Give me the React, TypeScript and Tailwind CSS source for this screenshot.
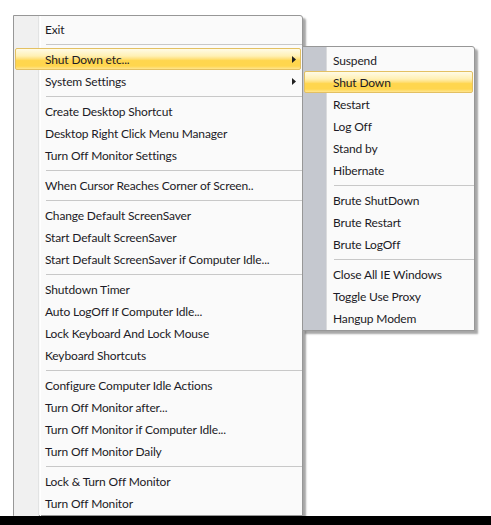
type Entry = { label: string; arrow?: boolean; active?: boolean } | 'sep'

const mainItems: Entry[] = [
  { label: 'Exit' },
  'sep',
  { label: 'Shut Down etc...', arrow: true, active: true },
  { label: 'System Settings', arrow: true },
  'sep',
  { label: 'Create Desktop Shortcut' },
  { label: 'Desktop Right Click Menu Manager' },
  { label: 'Turn Off Monitor Settings' },
  'sep',
  { label: 'When Cursor Reaches Corner of Screen..' },
  'sep',
  { label: 'Change Default ScreenSaver' },
  { label: 'Start Default ScreenSaver' },
  { label: 'Start Default ScreenSaver if Computer Idle...' },
  'sep',
  { label: 'Shutdown Timer' },
  { label: 'Auto LogOff If Computer Idle...' },
  { label: 'Lock Keyboard And Lock Mouse' },
  { label: 'Keyboard Shortcuts' },
  'sep',
  { label: 'Configure Computer Idle Actions' },
  { label: 'Turn Off Monitor after...' },
  { label: 'Turn Off Monitor if Computer Idle...' },
  { label: 'Turn Off Monitor Daily' },
  'sep',
  { label: 'Lock & Turn Off Monitor' },
  { label: 'Turn Off Monitor' },
]

const subItems: Entry[] = [
  { label: 'Suspend' },
  { label: 'Shut Down', active: true },
  { label: 'Restart' },
  { label: 'Log Off' },
  { label: 'Stand by' },
  { label: 'Hibernate' },
  'sep',
  { label: 'Brute ShutDown' },
  { label: 'Brute Restart' },
  { label: 'Brute LogOff' },
  'sep',
  { label: 'Close All IE Windows' },
  { label: 'Toggle Use Proxy' },
  { label: 'Hangup Modem' },
]

const highlight =
  'border border-[#e3c062] rounded-[2px] bg-[linear-gradient(to_bottom,#fffbe6_0%,#fff0b4_35%,#ffe07a_50%,#ffd64e_58%,#ffd64e_85%,#ffe590_100%)]'

const MenuList = ({ items, textLeft }: { items: Entry[]; textLeft: string }) => (
  <div className="relative flex flex-col pt-[2px] pb-[1px]">
    {items.map((item, i) =>
      item === 'sep' ? (
        <div key={i} className={`flex h-[8px] items-center ${textLeft}`}>
          <div className="h-px w-full bg-[#c8c8c8]" />
        </div>
      ) : (
        <div
          key={i}
          className={`relative mx-[1px] flex h-[22px] items-center pt-px ${
            item.active ? highlight : 'border border-transparent'
          }`}
        >
          <span
            className={`${textLeft} -ml-[3px] whitespace-nowrap text-[12px] tracking-[-0.15px] text-[#1c1a26]`}
          >
            {item.label}
          </span>
          {item.arrow && (
            <svg
              className="absolute right-[4px] top-[7px]"
              width="4"
              height="7"
              viewBox="0 0 4 7"
            >
              <path d="M0 0 L4 3.5 L0 7 Z" fill="#202020" />
            </svg>
          )}
        </div>
      ),
    )}
  </div>
)

export default function App() {
  return (
    <div
      className="flex h-[525px] w-[491px] flex-col bg-white"
      style={{ fontFamily: 'Lato, "Noto Sans", sans-serif' }}
    >
      <div className="relative h-[516px] w-full">
        {/* main menu */}
        <div className="ml-[13px] mt-[15px] flex w-[290px] rounded-tr-[3px] border border-[#979797] bg-[#fafafa] shadow-[3px_3px_2px_rgba(0,0,0,0.35)]">
          <div className="absolute bottom-0 top-[16px] ml-0 w-[25px] border-r border-[#e2e3e3] bg-[#f0f0f0]" />
          <div className="absolute bottom-0 top-[16px] ml-[26px] w-px bg-white" />
          <div className="w-full">
            <MenuList items={mainItems} textLeft="pl-[32px]" />
          </div>
        </div>

        {/* submenu */}
        <div className="absolute left-[302px] top-[46px] w-[173px] rounded-tr-[3px] border border-[#979797] bg-[#fafafa] shadow-[3px_3px_2px_rgba(0,0,0,0.35)]">
          <div className="absolute bottom-0 left-0 top-0 w-[24px] border-r border-[#dadbdd] bg-[#c5c8cf]" />
          <MenuList items={subItems} textLeft="pl-[31px]" />
        </div>
      </div>
      <div className="h-[9px] w-full bg-black" />
    </div>
  )
}
